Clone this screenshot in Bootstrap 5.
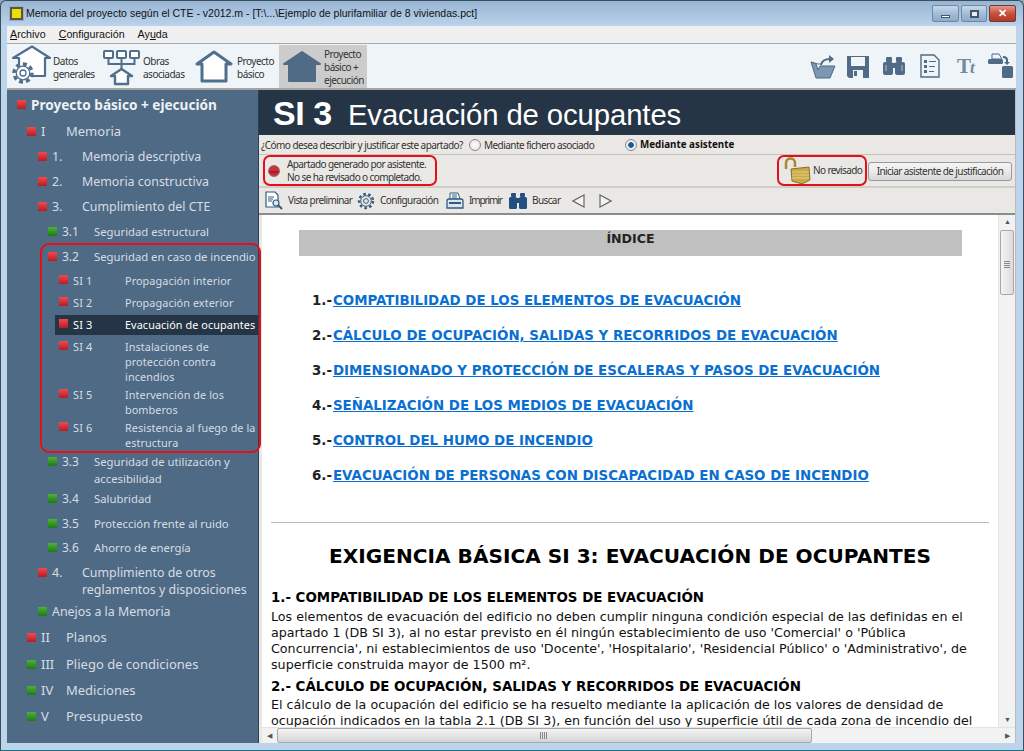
<!DOCTYPE html>
<html lang="es"><head><meta charset="utf-8"><title>Memoria del proyecto</title>
<link href="https://cdn.jsdelivr.net/npm/bootstrap@5.3.0/dist/css/bootstrap.min.css" rel="stylesheet">
<style>
html,body{width:1024px;height:751px;overflow:hidden;background:#8fa9c0}
body{font-family:"Noto Sans",sans-serif;color:#222}
.win{width:1024px;height:751px;background:linear-gradient(#98b5d4,#bcd4ec 26px,#bcd4ec);border:1px solid #3c4c58;border-bottom-color:#1c6f80;border-radius:6px 6px 0 0;display:flex;flex-direction:column;padding:0 7px 7px 6px;overflow:hidden}
.ttl{height:25px;flex:none;font-size:10.5px;color:#111;font-family:"Liberation Sans",sans-serif}
.ttl-ic{width:13px;height:13px;background:#e8e000;border:2px solid #555;margin-right:3px;margin-left:3px;outline:1px solid #aaa;display:block}
.wb{height:17px;width:26px;margin-left:2px;border:1px solid #6c88a4;border-radius:2px;background:linear-gradient(#c8d8ea,#a4bdd8 50%,#8eaac8);display:flex;align-items:center;justify-content:center}
.wb i{display:block}.wbm{width:27px}.wbx{width:27px;background:linear-gradient(#e09a88,#c9503a 50%,#b03828);border-color:#6c3a34;color:#fff;font-size:11px;font-weight:700;line-height:1}
.mnu{height:18px;flex:none;background:#f0f0f0;border-bottom:1px solid #a8a8a8;font-size:10.7px;padding-left:3px;gap:13px;color:#111;font-family:"Liberation Sans",sans-serif}
.mnu u{text-underline-offset:1px}
.tbar{height:46px;flex:none;background:#eef4f8;border-bottom:2px solid #a4a4a4;font-size:10px;line-height:13px;color:#333;letter-spacing:-.5px}
.tb{display:flex;align-items:center;height:44px}
.tb span{padding-top:3px}
.tb-on{background:#cccccc;height:43px;padding-left:4px;width:88px}
.tb svg{flex:none}
.tright{margin-right:2px}
.mainr{flex:1;min-height:0;display:flex}
.side{width:252px;flex:none;background:#4f6a84;color:#d6dde4;font-size:13px;padding-top:1px;border-right:1px solid #2f3f4f;position:relative}
.rw{display:flex;align-items:flex-start;position:relative;white-space:nowrap}
.sq{width:9px;height:9px;flex:none;display:block}
.rd{background:linear-gradient(#ef4a50,#b81c22)}
.gr{background:linear-gradient(#4fb03a,#1c7a18)}
.n{flex:none}
.l0{height:27px;padding:5px 0 0 10px;font-weight:700;font-size:13.6px;color:#eef1f4;line-height:18px}
.l0 .sq{margin:4px 5px 0 0}
.l1{height:26px;padding:4px 0 0 20px;line-height:18px;font-size:13px}
.l1.pl{height:27px}
.l1 .sq{margin:5px 5px 0 0}.l1 .n{width:25px}
.l2{height:25px;padding:4px 0 0 31px;line-height:17px;font-size:12.4px}
.l2 .sq{margin:4px 5px 0 0}.l2 .n{width:30px}
.l2.dbl{height:39px}
.l3{height:24.5px;padding:4px 0 0 41px;line-height:17px;font-size:11.3px;color:#d6dde4}
.l3 .sq{margin:4px 5px 0 0}.l3 .n{width:32px;font-size:12px}
.l3.ini{height:25px}
.l3.sp{height:27px;letter-spacing:-.02px}
.l3.dbl{height:37px}
.l4{height:22px;padding:2px 0 0 52px;line-height:15px;font-size:10.8px;letter-spacing:.1px}
.l4.m3{height:48px}.l4.m2{height:33px}
.l4 .sq{margin:2px 5px 0 0}.l4 .n{width:52px;font-size:11px}
.l4.cur{background:#253545;margin-left:48px;padding-left:4px;color:#fff;height:20px;margin-bottom:2px}
.cgrp{position:relative;margin-bottom:-2px}
.cgrp::after{content:"";position:absolute;left:33px;right:-3px;top:-1px;bottom:-2px;border:2px solid #e3101c;border-radius:9px;pointer-events:none;z-index:3}
.rgt{flex:1;min-width:0;display:flex;flex-direction:column;background:#eae8e4;border-right:1px solid #bbb}
.hd{height:45px;flex:none;background:#253545;color:#fff;font-family:"Liberation Sans",sans-serif;padding:0 0 0 14px;line-height:46px;white-space:nowrap}
.hd b{font-size:34px;letter-spacing:-.4px;margin-right:16px}.hd span{font-size:29.3px;letter-spacing:-.1px}
.qs{height:20px;flex:none;font-size:10px;border-bottom:1px solid #c4c2be;padding:1px 0 0 2px;letter-spacing:-.55px;color:#333;white-space:nowrap}
.rad{width:12px;height:12px;border-radius:50%;border:1px solid #8a8a8a;background:radial-gradient(#fff,#ddd);margin:0 3px;flex:none;display:block}
.rad.on{background:radial-gradient(#1c5a90 35%,#e8eef2 45%)}
.qs b{font-size:9.8px;letter-spacing:0;color:#111}
.stt{height:33px;flex:none;font-size:10px;line-height:13px;border-bottom:2px solid #d0cec9;position:relative;letter-spacing:-.6px;color:#333;white-space:nowrap}
.redbox{border:2px solid #e3101c;border-radius:7px;height:31px;display:flex;align-items:center}
.led{width:12px;height:12px;border-radius:50%;background:linear-gradient(#c8303c 0 45%,#a01824 55%,#d83c48);border:1px solid #9a6a6e;margin:0 7px 0 3px;display:block;flex:none}
.wbtn{height:19px;width:144px;border:1px solid #999;border-radius:3px;background:linear-gradient(#f4f4f4,#ebebeb 50%,#d6d6d6);font-size:10px;line-height:16px;text-align:center;color:#333;margin:2px 3px 0 1px;letter-spacing:-.6px}
.ptb{height:27px;flex:none;font-size:10px;color:#333;padding-left:6px;letter-spacing:-.6px;border-bottom:2px solid #8c8c8c;white-space:nowrap}
.ptb svg{flex:none}
.imp{letter-spacing:-1.1px}
.docwrap{flex:1;min-height:0;position:relative;background:#fff;margin-left:3px;overflow:hidden}
.doc{height:512px;overflow:hidden;margin-right:17px;padding:0 9px;font-family:"DejaVu Sans",sans-serif;font-size:12.7px;line-height:16px;color:#111}
.idx{background:silver;height:26px;margin:15px 27px 0 28px;text-align:center;font-weight:700;font-size:12.6px;line-height:18px;color:#222}
.lks{padding:36px 0 0 41px;font-weight:700;font-size:13.38px;line-height:18px}
.lks div{height:35px;white-space:nowrap;color:#222}
.lks a{color:#0a6fd0;margin-left:1px}
.hrr{border-top:1px solid #bbb;margin:20px 0 0}
.h1x{font-size:20.1px;font-weight:700;text-align:center;margin:20px 0 19px;line-height:26px;color:#000}
.h2x{font-weight:700;font-size:13.4px;line-height:20px;color:#000}
.ptxt{margin:1px 0 4px}
.ptxt.tail{margin-top:0}
.vs{position:absolute;right:0;top:0;width:17px;height:512px;background:#f2f2f2;border-left:1px solid #e4e4e4}
.hs{position:absolute;left:0;right:0;bottom:0;height:16px;background:#f2f2f2;border-top:1px solid #e4e4e4}
.th{position:absolute;background:linear-gradient(90deg,#f4f4f4,#dcdcdc);border:1px solid #a8a8a8;border-radius:2px}
.arr{position:absolute;font-size:7px;line-height:8px;color:#555}
.grip{position:absolute;left:3px;right:3px;top:30px;height:7px;background:repeating-linear-gradient(#888 0 1px,transparent 1px 2px)}
.grip2{position:absolute;left:262px;width:7px;top:3px;bottom:3px;background:repeating-linear-gradient(90deg,#888 0 1px,transparent 1px 2px)}
</style></head><body>
<div class="win">
 <div class="ttl d-flex align-items-center">
  <i class="ttl-ic"></i><span>Memoria del proyecto según el CTE - v2012.m - [T:\...\Ejemplo de plurifamiliar de 8 viviendas.pct]</span>
  <div class="ms-auto d-flex">
   <div class="wb wbm"><i style="width:9px;height:3px;background:#fff;border:1px solid #456;margin-top:6px"></i></div>
   <div class="wb"><i style="width:9px;height:8px;border:2px solid #456;background:#e8eef4"></i></div>
   <div class="wb wbx">✕</div>
  </div>
 </div>
 <div class="mnu d-flex align-items-center">
  <span><u>A</u>rchivo</span><span><u>C</u>onfiguración</span><span>Ay<u>u</u>da</span>
 </div>
 <div class="tbar d-flex align-items-center">
  <div class="tb" style="width:93px;margin-left:3px">
   <svg width="42" height="42" viewBox="0 0 42 42" fill="none"><path d="M9 20V13H3L22 1.500L40 13h-5v18H20" fill="#fff" stroke="#4f6f8c" stroke-width="2.200" stroke-linejoin="round"/><circle cx="13" cy="28" r="9" fill="#fff" stroke="#4f6f8c" stroke-width="3.400" stroke-dasharray="4 3"/><circle cx="13" cy="28" r="6.800" fill="#fff" stroke="#4f6f8c" stroke-width="1.300"/><circle cx="13" cy="28" r="3" fill="#fff" stroke="#4f6f8c" stroke-width="1.300"/></svg>
   <span style="margin-left:1px">Datos<br>generales</span>
  </div>
  <div class="tb" style="width:92px">
   <svg width="38" height="40" viewBox="0 0 38 40" fill="none" stroke="#4f6f8c" stroke-width="2"><rect x="1" y="5" width="9" height="7" rx="1" fill="#fff"/><rect x="14" y="5" width="9" height="7" rx="1" fill="#fff"/><rect x="27" y="5" width="9" height="7" rx="1" fill="#fff"/><path d="M5.500 12v6h26v-6M18.500 12v12"/><path d="M8 30l10.500-7L29 30h-4v8H12v-8z" fill="#fff" stroke-width="2.400" stroke-linejoin="round"/></svg>
   <span style="margin-left:2px">Obras<br>asociadas</span>
  </div>
  <div class="tb" style="width:84px">
   <svg width="38" height="38" viewBox="0 0 38 38" fill="none"><path d="M2 17L19 5l17 12h-5v17H7V17z" fill="#fff" stroke="#4f6f8c" stroke-width="3" stroke-linejoin="round"/></svg>
   <span class="ms-1">Proyecto<br>básico</span>
  </div>
  <div class="tb tb-on">
   <svg width="38" height="38" viewBox="0 0 38 38"><path d="M1 17L19 5l18 12h-5v17H6V17z" fill="#4f6b85" stroke="#4f6b85" stroke-width="2" stroke-linejoin="round"/></svg>
   <span style="margin-left:3px">Proyecto<br>básico +<br>ejecución</span>
  </div>
  <div class="ms-auto d-flex align-items-center tright">
   <svg width="26" height="25" viewBox="0 0 26 25"><path d="M1 8l5 16h14l5-12H10l-2 4-2-6z" fill="#7d97b0" stroke="#4f6b85"/><path d="M1 8l7 2 4 0" fill="#fff" stroke="#4f6b85"/><path d="M11 11c1-5 5-6 9-6" fill="none" stroke="#4f6b85" stroke-width="1.800"/><path d="M19 1l5 4-5 4z" fill="#4f6b85"/></svg>
   <svg width="22" height="23" viewBox="0 0 22 23" style="margin-left:11px"><path d="M0 1h22v22H2l-2-2z" fill="#4f6b85"/><rect x="4" y="2" width="14" height="9" fill="#eef4f8"/><rect x="6" y="15" width="10" height="8" fill="#eef4f8"/><rect x="7" y="16" width="3" height="5" fill="#4f6b85"/></svg>
   <svg width="24" height="20" viewBox="0 0 24 20" fill="#4f6b85" style="margin-left:13px"><rect x="4" y="1" width="6" height="5" rx="1"/><rect x="14" y="1" width="6" height="5" rx="1"/><rect x="1" y="6" width="10" height="13" rx="2"/><rect x="13" y="6" width="10" height="13" rx="2"/><rect x="10" y="7" width="4" height="5"/><path d="M4 9v6M20 9v6" stroke="#8fa6bc" stroke-width="1.500"/></svg>
   <svg width="20" height="24" viewBox="0 0 20 24" style="margin-left:14px"><path d="M1 1h13l5 5v17H1z" fill="#eef4f8" stroke="#4f6b85" stroke-width="1.400"/><g fill="#4f6b85"><rect x="4" y="6" width="3" height="3"/><rect x="4" y="11" width="3" height="3"/><rect x="4" y="16" width="3" height="3"/><rect x="9" y="7" width="7" height="1"/><rect x="9" y="12" width="6" height="1"/><rect x="9" y="17" width="5" height="1"/></g></svg>
   <span style="font:700 21px 'Liberation Serif',serif;color:#6f8aa4;width:20px;letter-spacing:-1px;margin-left:17px">T<i style="font-size:17px">t</i></span>
   <svg width="26" height="26" viewBox="0 0 26 26" fill="#4f6b85" style="margin-left:11px"><path d="M4 1h7l3 5H4z" fill="#eef4f8" stroke="#4f6b85"/><rect x="0" y="6" width="15" height="5" rx="1.500"/><path d="M15 3c3 0 5 1 5 4v2h2l-3 3-3-3h2V7c0-1-1-2-3-2z"/><rect x="14" y="13" width="11" height="12" rx="1.500"/></svg>
  </div>
 </div>
 <div class="mainr">
  <nav class="side">
   <div class="rw l0"><i class="sq rd"></i>Proyecto básico + ejecución</div>
   <div class="rw l1"><i class="sq rd"></i><span class="n">I</span>Memoria</div>
   <div class="rw l2"><i class="sq rd"></i><span class="n">1.</span>Memoria descriptiva</div>
   <div class="rw l2"><i class="sq rd"></i><span class="n">2.</span>Memoria constructiva</div>
   <div class="rw l2"><i class="sq rd"></i><span class="n">3.</span>Cumplimiento del CTE</div>
   <div class="rw l3 ini"><i class="sq gr"></i><span class="n">3.1</span>Seguridad estructural</div>
   <div class="cgrp">
    <div class="rw l3 sp"><i class="sq rd"></i><span class="n">3.2</span>Seguridad en caso de incendio</div>
    <div class="rw l4"><i class="sq rd"></i><span class="n">SI 1</span>Propagación interior</div>
    <div class="rw l4"><i class="sq rd"></i><span class="n">SI 2</span>Propagación exterior</div>
    <div class="rw l4 cur"><i class="sq rd"></i><span class="n">SI 3</span>Evacuación de ocupantes</div>
    <div class="rw l4 m3"><i class="sq rd"></i><span class="n">SI 4</span><span>Instalaciones de<br>protección contra<br>incendios</span></div>
    <div class="rw l4 m2"><i class="sq rd"></i><span class="n">SI 5</span><span>Intervención de los<br>bomberos</span></div>
    <div class="rw l4 m2"><i class="sq rd"></i><span class="n">SI 6</span><span>Resistencia al fuego de la<br>estructura</span></div>
   </div>
   <div class="rw l3 dbl"><i class="sq gr"></i><span class="n">3.3</span><span>Seguridad de utilización y<br>accesibilidad</span></div>
   <div class="rw l3"><i class="sq gr"></i><span class="n">3.4</span>Salubridad</div>
   <div class="rw l3"><i class="sq gr"></i><span class="n">3.5</span>Protección frente al ruido</div>
   <div class="rw l3"><i class="sq gr"></i><span class="n">3.6</span>Ahorro de energía</div>
   <div class="rw l2 dbl"><i class="sq rd"></i><span class="n">4.</span><span>Cumplimiento de otros<br>reglamentos y disposiciones</span></div>
   <div class="rw l2"><i class="sq gr"></i>Anejos a la Memoria</div>
   <div class="rw l1 pl"><i class="sq rd"></i><span class="n">II</span>Planos</div>
   <div class="rw l1"><i class="sq gr"></i><span class="n">III</span>Pliego de condiciones</div>
   <div class="rw l1"><i class="sq gr"></i><span class="n">IV</span>Mediciones</div>
   <div class="rw l1"><i class="sq gr"></i><span class="n">V</span>Presupuesto</div>
  </nav>
  <section class="rgt">
   <div class="hd"><b>SI 3</b><span>Evacuación de ocupantes</span></div>
   <div class="qs d-flex align-items-center"><span style="width:205px">¿Cómo desea describir y justificar este apartado?</span><i class="rad"></i><span style="width:138px">Mediante fichero asociado</span><i class="rad on"></i><b>Mediante asistente</b></div>
   <div class="stt d-flex align-items-center">
    <div class="redbox ms-1" style="width:174px"><i class="led"></i><span>Apartado generado por asistente.<br>No se ha revisado o completado.</span></div>
    <div class="redbox ms-auto" style="width:90px">
     <svg width="30" height="28" viewBox="0 0 30 28" class="ms-1 flex-shrink-0"><path d="M3 12V6c0-6 9-6 9 0v4" fill="none" stroke="#a88a30" stroke-width="2.600"/><path d="M8 12l18-2 1 13-8 4-10-3z" fill="#c8a848" stroke="#8a7028"/><path d="M9 15h17M9 18h17M9 21h17" stroke="#e8d080"/></svg>
     <span>No revisado</span>
    </div>
    <div class="wbtn">Iniciar asistente de justificación</div>
   </div>
   <div class="ptb d-flex align-items-center">
    <svg width="18" height="19" viewBox="0 0 18 19"><path d="M1 1h9l3 3v12H1z" fill="#fff" stroke="#35597f" stroke-width="1.200"/><path d="M3 6h6M3 8h5M3 10h4" stroke="#35597f"/><circle cx="11" cy="12" r="3" fill="#dde7f0" stroke="#35597f" stroke-width="1.200"/><path d="M13 14l4 4" stroke="#35597f" stroke-width="2"/></svg>
    <span style="width:74px;padding-left:5px">Vista preliminar</span>
    <svg width="18" height="18" viewBox="0 0 18 18" fill="none"><circle cx="9" cy="9" r="7" stroke="#35597f" stroke-width="2.400" stroke-dasharray="2.600 2.400"/><circle cx="9" cy="9" r="5.300" stroke="#35597f"/><circle cx="9" cy="9" r="2.400" stroke="#35597f"/></svg>
    <span style="width:71px;padding-left:5px">Configuración</span>
    <svg width="18" height="18" viewBox="0 0 18 18"><path d="M4 1h8l2 6H4z" fill="#fff" stroke="#35597f"/><path d="M6 3h5M6 5h5" stroke="#35597f"/><path d="M1 9c0-2 1-2 2-2h12c1 0 2 0 2 2v7H1z" fill="#dbe5ee" stroke="#35597f" stroke-width="1.300"/><rect x="3" y="10" width="12" height="2" fill="#35597f"/></svg>
    <span class="imp" style="width:44px;padding-left:5px">Imprimir</span>
    <svg width="20" height="18" viewBox="0 0 20 18" fill="#23507f"><rect x="3" y="1" width="5" height="4" rx="1"/><rect x="12" y="1" width="5" height="4" rx="1"/><rect x="1" y="5" width="8" height="12" rx="1.500"/><rect x="11" y="5" width="8" height="12" rx="1.500"/><rect x="9" y="6" width="2" height="5"/></svg>
    <span style="width:44px;padding-left:4px">Buscar</span>
    <svg width="13" height="14" viewBox="0 0 13 14" fill="#f4f4f4" stroke="#666" stroke-width="1.200"><path d="M12 1v12L1 7z"/></svg>
    <svg width="13" height="14" viewBox="0 0 13 14" fill="#f4f4f4" stroke="#666" stroke-width="1.200" style="margin-left:14px"><path d="M1 1v12l11-6z"/></svg>
   </div>
   <div class="docwrap">
    <div class="doc">
     <div class="idx">ÍNDICE</div>
     <div class="lks">
      <div>1.-<a href="#">COMPATIBILIDAD DE LOS ELEMENTOS DE EVACUACIÓN</a></div>
      <div>2.-<a href="#">CÁLCULO DE OCUPACIÓN, SALIDAS Y RECORRIDOS DE EVACUACIÓN</a></div>
      <div>3.-<a href="#">DIMENSIONADO Y PROTECCIÓN DE ESCALERAS Y PASOS DE EVACUACIÓN</a></div>
      <div>4.-<a href="#">SEÑALIZACIÓN DE LOS MEDIOS DE EVACUACIÓN</a></div>
      <div>5.-<a href="#">CONTROL DEL HUMO DE INCENDIO</a></div>
      <div>6.-<a href="#">EVACUACIÓN DE PERSONAS CON DISCAPACIDAD EN CASO DE INCENDIO</a></div>
     </div>
     <div class="hrr"></div>
     <div class="h1x">EXIGENCIA BÁSICA SI 3: EVACUACIÓN DE OCUPANTES</div>
     <div class="h2x">1.- COMPATIBILIDAD DE LOS ELEMENTOS DE EVACUACIÓN</div>
     <div class="ptxt">Los elementos de evacuación del edificio no deben cumplir ninguna condición especial de las definidas en el apartado 1 (DB SI 3), al no estar previsto en él ningún establecimiento de uso 'Comercial' o 'Pública Concurrencia', ni establecimientos de uso 'Docente', 'Hospitalario', 'Residencial Público' o 'Administrativo', de superficie construida mayor de 1500 m².</div>
     <div class="h2x">2.- CÁLCULO DE OCUPACIÓN, SALIDAS Y RECORRIDOS DE EVACUACIÓN</div>
     <div class="ptxt tail">El cálculo de la ocupación del edificio se ha resuelto mediante la aplicación de los valores de densidad de ocupación indicados en la tabla 2.1 (DB SI 3), en función del uso y superficie útil de cada zona de incendio del</div>
    </div>
    <div class="vs">
     <span class="arr" style="left:5px;top:3px">▲</span>
     <div class="th" style="left:1px;right:1px;top:15px;height:65px"><div class="grip"></div></div>
     <span class="arr" style="left:5px;bottom:3px">▼</span>
    </div>
    <div class="hs">
     <span class="arr" style="left:5px;top:4px">◀</span>
     <div class="th" style="left:15px;width:535px;top:0;bottom:0;background:linear-gradient(#f4f4f4,#d4d4d4)"><div class="grip2"></div></div>
     <span class="arr" style="right:5px;top:4px">▶</span>
    </div>
   </div>
  </section>
 </div>
</div>
</body></html>
